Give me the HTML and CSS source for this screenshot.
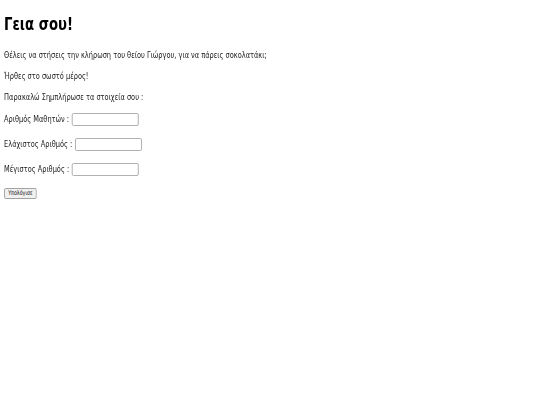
FILE: index.html
```html
<!DOCTYPE html>
<html lang="el"><head><meta charset="utf-8"><title>Γεια σου!</title><link rel="stylesheet" href="styles.css"></head>
<body>
<main class="page">
  <h1 class="title">Γεια σου!</h1>
  <p class="line">Θέλεις να στήσεις την κλήρωση του θείου Γιώργου, για να πάρεις σοκολατάκι;</p>
  <p class="line">Ήρθες στο σωστό μέρος!</p>
  <p class="line">Παρακαλώ Σημπλήρωσε τα στοιχεία σου :</p>
  <form class="form">
    <label class="row">Αριθμός Μαθητών : <input class="field" type="text"></label>
    <label class="row">Ελάχιστος Αριθμός : <input class="field" type="text"></label>
    <label class="row">Μέγιστος Αριθμός : <input class="field" type="text"></label>
    <div class="actions"><button class="btn" type="button">Υπολόγισε</button></div>
  </form>
</main>
</body></html>
```
FILE: styles.css
```css
html,body{margin:0;padding:0;background:#fff;}
.page{
  font-family:"DejaVu Sans Condensed","DejaVu Sans",sans-serif;
  color:#1a1a1a;
  padding-left:5px;
  transform:scaleX(0.816);
  transform-origin:0 0;
}
.title{
  margin:13px 0 15px;
  font-size:18px;
  line-height:22px;
  font-weight:bold;
  color:#000;
}
.line{
  margin:0 0 10px;
  font-size:9px;
  line-height:11px;
}
.form{margin:0;}
.row{
  display:flex;
  align-items:center;
  height:12px;
  margin-bottom:13px;
  font-size:9px;
  line-height:11px;
  white-space:pre;
}
.field{
  box-sizing:border-box;
  width:82px;
  height:13px;
  margin:0 0 0 1px;
  padding:0 2px;
  border:1px solid #a8a8a8;
  border-radius:2px;
  background:#fff;
  font-size:8px;
}
.actions{height:12px;display:flex;}
.btn{
  box-sizing:border-box;
  height:11px;
  width:40px;
  padding:0;
  margin:0;
  font-family:"DejaVu Sans Condensed","DejaVu Sans",sans-serif;
  font-size:6.5px;
  line-height:9px;
  color:#111;
  background:#f0f0f0;
  border:1px solid #999;
  border-radius:2px;
}
```
